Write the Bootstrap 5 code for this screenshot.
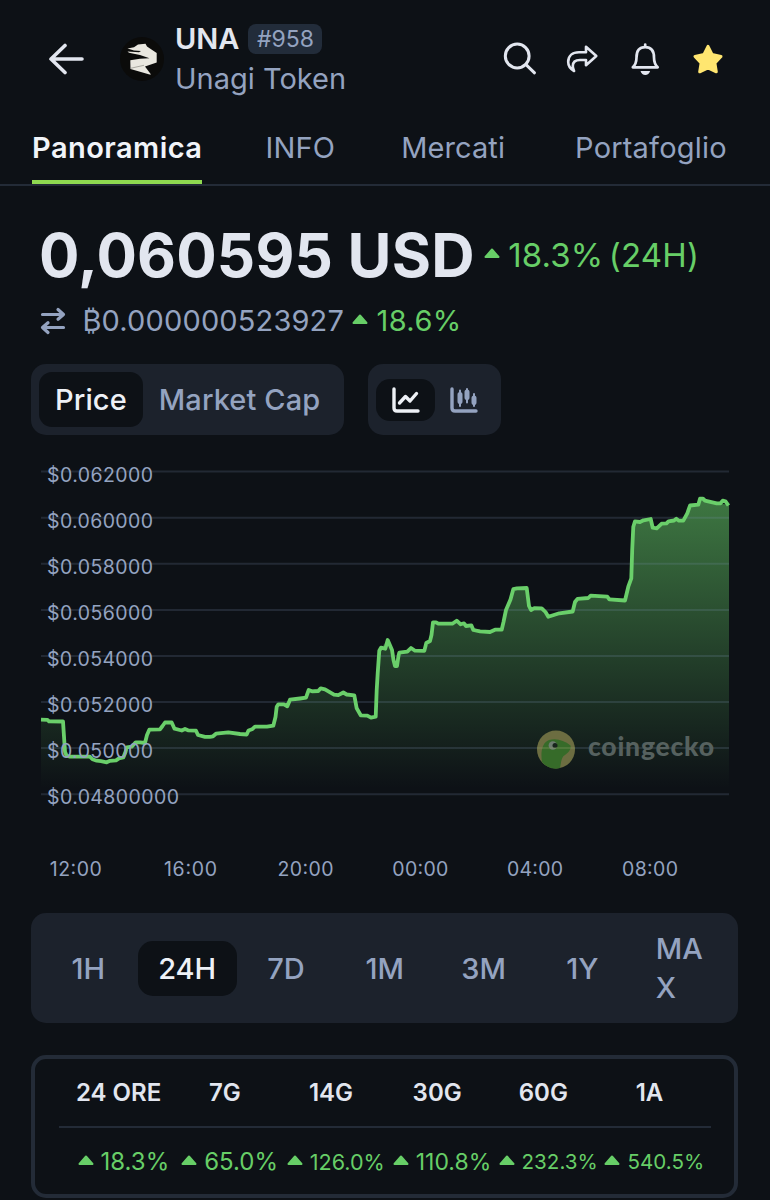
<!DOCTYPE html>
<html lang="it">
<head>
<meta charset="utf-8">
<meta name="viewport" content="width=device-width, initial-scale=1">
<title>UNA – Unagi Token</title>
<link href="https://cdn.jsdelivr.net/npm/bootstrap@5.3.0/dist/css/bootstrap.min.css" rel="stylesheet">
<style>
:root{--bg:#0d1116;--panel:#1c222c;--line:#232b37;--muted:#94a3c0;--fg:#e2e6ef;--up:#67ce67}
body{background:var(--bg);color:var(--fg);font-family:Inter,"Liberation Sans",sans-serif;font-size:29px;line-height:40px;width:770px;height:1200px;overflow:hidden}
svg{display:block;flex:none}
.muted{color:var(--muted)}
.up{color:var(--up)}
.topbar{height:118px;padding:0 44px 0 48px}
.avatar{margin-left:36px;margin-right:11px}
.rank{background:#222c3a;border-radius:8px;font-size:23px;line-height:31px;height:30px;width:74px;text-align:center;margin-left:9px}
.actions{gap:26.8px}
.tabs{height:68px;border-bottom:2px solid var(--line);padding-left:32px}
.tabs a{color:var(--muted);text-decoration:none;height:66px;padding-top:10px;border-bottom:4px solid transparent}
.tabs a.active{color:#f1f4f9;font-weight:600;border-color:#8fd950;letter-spacing:.45px}
.tabs .t-info{margin-left:63px;letter-spacing:.2px}
.tabs .t-mkt{margin-left:66px;letter-spacing:.1px}
.tabs .t-port{margin-left:70px;letter-spacing:.2px}
.price-row{height:70px;margin-top:34px;padding-left:39px}
.price{font-size:60px;font-weight:700;line-height:70px;letter-spacing:.2px}
.change{font-size:33px;letter-spacing:.15px;word-spacing:-4px}
.btc-row{height:40px;margin-top:11px;padding-left:40px}
.btc{letter-spacing:.15px}
.btcp{letter-spacing:.4px}
.switches{margin:23px 0 0 31px;gap:24px}
.seg{background:var(--panel);border-radius:15px;height:71px;padding:0 8px}
.seg-btn{border-radius:13px;height:55px;font-weight:500;padding:0 16px;line-height:56px;letter-spacing:.1px}
.on{background:var(--bg);color:#eef1f6}
.seg-icon{height:42px;width:58.5px;border-radius:14px}
.chart{margin-top:15px}
.ranges{margin:23px 32px 0 31px;height:110px;border-radius:15px;background:var(--panel);padding:0 8px;font-weight:500}
.ranges .cell{flex:0 0 98.8px;text-align:center;height:55px;line-height:55px;border-radius:15px}
.ranges .wrap{height:auto;line-height:39px;text-align:left;padding:0 22px 0 24px;word-break:break-all}
.perf{margin:32px 32px 0 31px;height:143px;border:4px solid var(--line);border-radius:15px;padding:0 23px 0 24px}
.perf-head,.perf-vals{display:grid;grid-template-columns:repeat(6,106.2px);text-align:center;margin-left:6.5px}
.perf-head{height:67px;padding-top:14px;font-size:24px;font-weight:600}
.perf hr{margin:0;border:0;height:2px;background:var(--line);opacity:1}
.perf-vals{padding-top:14px;font-size:24px;margin-left:11.3px}
.perf-vals>div{gap:7px}
.perf-vals svg{margin-bottom:4px}
.perf-vals .s23{font-size:23px}
.perf-vals .s22{font-size:21.6px}
.perf-vals .s21{font-size:20.6px}
</style>
</head>
<body>
<svg width="0" height="0" class="position-absolute"><defs>
<symbol id="tri" viewBox="0 0 16 11"><path d="M8 1.500 14.500 9H1.500Z" fill="#67ce67" stroke="#67ce67" stroke-width="2" stroke-linejoin="round"/></symbol>
</defs></svg>

<header class="topbar d-flex align-items-center">
  <svg width="36" height="32" viewBox="0 0 36 32" fill="none" stroke="#e2e6ef" stroke-width="3.600" stroke-linecap="round" stroke-linejoin="round"><path d="M34 16H3M17 2.500 3 16 17 29.500"/></svg>
  <svg class="avatar" width="44" height="44" viewBox="0 0 44 44"><circle cx="22" cy="22" r="22" fill="#0b0b0a"/><path d="M7.500 11.500 14 10.200 18 7.500 25.500 6.700 27 9.500 36.700 16V25.500L25 29.500 31 37.500 29.500 37.600 10.500 32 10.300 23.200 20 21.800 29.500 21.300 20 18 9 15.800 7.500 14.500 19 15.300 21 14 14 13.500Z" fill="#e9e7df"/><path d="M11 31.200 24 28.300" stroke="#8d8b84" stroke-width=".7"/></svg>
  <div>
    <div class="d-flex align-items-center"><span class="fw-semibold">UNA</span><span class="rank muted">#958</span></div>
    <div class="muted">Unagi Token</div>
  </div>
  <div class="actions d-flex ms-auto">
    <svg width="36" height="36" viewBox="0 0 36 36" fill="none" stroke="#e2e6ef" stroke-width="3" stroke-linecap="round"><circle cx="15.200" cy="15" r="11.900"/><path d="M24 23.600 32.500 31.800"/></svg>
    <svg width="36" height="36" viewBox="0 0 36 36" fill="none" stroke="#e2e6ef" stroke-width="2.600" stroke-linejoin="round"><path d="M22 5.800 32.300 15 22 24.200V19H16C11 19 8.800 21.500 8.800 25c0 2.300.7 3.500 1.300 5C6.500 28 4.200 25 4.200 21c0-6.500 4.500-9.700 10.800-9.700h7Z"/></svg>
    <svg width="36" height="36" viewBox="0 0 36 36" fill="none" stroke="#e2e6ef" stroke-width="2.700" stroke-linejoin="round" stroke-linecap="round"><path d="M18.200 3.500V6M5.800 26.300C8.200 24 9.500 21.500 9.500 16.500 9.500 9.500 12.500 6.200 18.200 6.200S27 9.500 27 16.500C27 21.500 28.300 24 30.700 26.300Z"/><path d="M13.500 30h9.600c-.8 2.500-2.500 3.900-4.800 3.900s-4-1.400-4.800-3.900Z" fill="#e2e6ef" stroke="none"/></svg>
    <svg width="36" height="36" viewBox="0 0 36 36" fill="#ffe670" stroke="#ffe670" stroke-width="3" stroke-linejoin="round"><path d="M18 5.300 22 13.500 31 15.400 24.900 21.900 26.300 30.800 18 26.800 9.700 30.800 11.100 21.900 5 15.400 14 13.500Z"/></svg>
  </div>
</header>

<nav class="tabs d-flex">
  <a href="#" class="active">Panoramica</a><a href="#" class="t-info">INFO</a><a href="#" class="t-mkt">Mercati</a><a href="#" class="t-port">Portafoglio</a>
</nav>

<main>
  <div class="price-row d-flex align-items-center">
    <span class="price">0,060595 USD</span>
    <svg width="16" height="11" style="margin:0 8px 3px 9.5px"><use href="#tri"/></svg>
    <span class="up change">18.3% (24H)</span>
  </div>
  <div class="btc-row d-flex align-items-center">
    <svg width="26" height="28" viewBox="0 0 26 28" fill="none" stroke="#94a3c0" stroke-width="3.200" stroke-linecap="round" stroke-linejoin="round"><path d="M2.500 7.500H23M18 2.500 23.500 7.500 18 12.300M23.500 20.500H3M8 15.700 2.500 20.500 8 25.500"/></svg>
    <span class="muted btc" style="margin-left:16.5px">₿0.000000523927</span>
    <svg width="16" height="11" style="margin:0 8px 3px 8.5px"><use href="#tri"/></svg>
    <span class="up btcp">18.6%</span>
  </div>

  <div class="switches d-flex">
    <div class="seg d-flex align-items-center"><span class="seg-btn on">Price</span><span class="seg-btn muted">Market Cap</span></div>
    <div class="seg d-flex align-items-center">
      <span class="seg-icon on d-flex align-items-center justify-content-center"><svg width="28" height="26" viewBox="0 0 28 26" fill="none" stroke="#eef1f6" stroke-width="3.400" stroke-linecap="round" stroke-linejoin="round"><path d="M2 2v19q0 3 3 3h21M7.500 16 13.500 9.500 18 14 24.500 6.500"/></svg></span>
      <span class="seg-icon d-flex align-items-center justify-content-center"><svg width="28" height="26" viewBox="0 0 28 26" fill="none" stroke="#94a3c0" stroke-linecap="round"><path stroke-width="3.400" d="M2 2v19q0 3 3 3h21"/><path stroke-width="2" d="M10 3.500v15.500M17 2v13.500M24 7v12"/><path stroke-width="5" d="M10 7.500v7M17 5v5.500M24 11v4.500"/></svg></span>
    </div>
  </div>

  <svg class="chart" width="770" height="440" viewBox="0 450 770 440">
    <defs><linearGradient id="fade" gradientUnits="userSpaceOnUse" x1="0" y1="498" x2="0" y2="788"><stop offset="0" stop-color="#67ce67" stop-opacity=".54"/><stop offset="1" stop-color="#67ce67" stop-opacity="0"/></linearGradient></defs>
    <path fill="url(#fade)" d="M41 720 62.700 721.500 65 751.700 70 756.700H90L96.700 761 106.700 762.300 118 759 123.300 757.300 126.700 747.300 135.700 742.300H145L149.300 729.300 160 729 165 722.300H171.700L175 729 196 730.700 200 736 210 736.700 216 733.300 246.700 734.700 255 726.300 273.300 726 276.700 706.700 284 704.300 290 699.300 306 697.700 308.700 690 320.700 688.300 334 694.700 354.300 695.300 356.700 708.300 360.700 715.300 375.700 716.700 377.700 673.300 381 647.700 387.700 640 395 666H397L399.300 652.700 411 648 424.300 650.700 430 641 433.300 622.300 452.300 623.700 456.700 620.700 471.300 625.700 480 631.300 490 632 501.700 629.700 506 610 513.300 589 526.700 588 531 610 541.700 608.300 548.300 616.700 572.700 611.300 576.700 599.300 590.700 595.700 607.300 596.700 625 600.300 631.300 578.300 633.300 526.700 635 521.300 650.700 519 652.700 527.700 656.700 528.300 668.300 521.300 683.300 520.700 690 505.300 698.300 504.700 700 498.700 716.700 503.300 729 504.700V790H41Z"/>
    <path stroke="#8297b8" stroke-opacity=".19" stroke-width="2" d="M41 471.500H729M41 517.700H729M41 563.800H729M41 610H729M41 656H729M41 702H729M41 748H729M41 794.300H729"/>
    <g transform="translate(537 730.500)"><circle cx="19" cy="19" r="19" fill="#6c6d41"/><path d="M5 31.500C3.500 22 5 12 12 9.500 20 7.500 27 10 33.500 15 34.500 20 30 23 26.500 25.500 24 28.500 24 33 23 37.500 16 39.500 9 36.500 5 31.500Z" fill="#366b29"/><circle cx="15.800" cy="15" r="4.200" fill="#6d7c70"/><circle cx="18" cy="15" r="2.500" fill="#17241c"/><path d="M0 17.500H38" stroke="#8a9a6a" stroke-opacity=".4" stroke-width="1.500"/></g>
    <text x="588" y="756" textLength="126" lengthAdjust="spacing" font-family="Lato,sans-serif" font-weight="900" font-size="26.500" fill="#56615f">coingecko</text>
    <path fill="none" stroke="#6acf6a" stroke-width="3.800" stroke-linejoin="round" stroke-linecap="butt" d="M41 719.700 47.500 719.900 49 721.300 63 721.500 65 751.700 66.500 755.500 70 756.700H90L92.500 759.300 96.700 760.700 101 761.200 106.700 762.300 110 760.800 116 760.300 119 758.300 123.300 757.500 125.500 752 126.700 747.300 131.700 746.700 135.700 742.300H140L145 743 147 735 149.300 729.700 160 729.300 162.500 726 165 722.500H171.700L174.500 728.700 181.700 730.500 185 729 188 730.300 196 730.700 198 735 205 736.800H210L213 736.300 216 733.700 228.300 732.300 240 734 246.700 734.500 248.500 730.500 252 729.300 255 726.600 267 726.700 273.300 725.700 275.500 717 276.700 706.700 278.300 704.300H284L287.300 706.300 290 699.700 300 698.500 306 697.700 308.700 690 312 691.300 318.300 691 320.700 688.300 325 689.300 334 694.700 338.300 695.200 343.300 692.500 346.700 694.500 354.300 695.300 356.700 708.300 360.700 715.300 367.300 715.700 371 717.700 375.700 716.700 376.700 690 377.700 673.300 379.300 650.700 381 647.700 385.300 648.700 387.700 640 392 650 393.500 660 395 666H397L398.500 656 399.300 652.700 407.300 651.700 411 648 415 650.700 424.300 650.900 426.300 643 430 641 431.500 635 433 622.300 436 622.300 438.300 623.700H452.300L456.700 620.700 460.700 624.300 464 623.300 466 626 471.300 625.300 473.300 630 480 631.300 490 632 495 629.700 501.700 629.700 503.500 622 506 610 510.500 599.500 513.300 589.200 517 588.300 526.700 588 529 606 531 610 534.300 608.200 541.700 608.300 545.500 612 548.300 616.700 559.300 613.300 572.700 611.500 575 602 577.500 598.800 588.300 598 590.700 595.700 607.300 596.700 609.300 599.300 625 600.500 628.300 586.700 631.300 578.300 632.200 550 633.300 526.700 635 521.300 640 522 643.500 520.300 650.700 519 652.700 527.700 656.700 528.300 661.700 523.700 666.500 523.300 668.500 521.300 674 520.500 676.300 518.700 679 520.700 683.300 520.700 687.300 513.300 690 505.500 698.300 504.700 700 498.700H703L705 500.700 716.700 503.300 720.500 503.300 722.700 500.700 725.500 501.300 728.500 505.500"/>
    <g fill="#94a3c0" font-family="Inter,sans-serif" font-size="19.500">
      <text x="47" y="481.500" textLength="106">$0.062000</text><text x="47" y="527.600" textLength="106">$0.060000</text><text x="47" y="573.700" textLength="106">$0.058000</text><text x="47" y="619.800" textLength="106">$0.056000</text><text x="47" y="665.900" textLength="106">$0.054000</text><text x="47" y="712" textLength="106">$0.052000</text><text x="47" y="758" textLength="106">$0.050000</text><text x="47" y="804" textLength="132">$0.04800000</text>
      <g text-anchor="middle"><text x="75.800" y="875.500" textLength="52">12:00</text><text x="190.500" y="875.500" textLength="53">16:00</text><text x="305.500" y="875.500" textLength="56">20:00</text><text x="420.300" y="875.500" textLength="56">00:00</text><text x="535" y="875.500" textLength="56">04:00</text><text x="650" y="875.500" textLength="56">08:00</text></g>
    </g>
  </svg>

  <div class="ranges d-flex align-items-center muted">
    <span class="cell">1H</span><span class="cell on">24H</span><span class="cell">7D</span><span class="cell">1M</span><span class="cell">3M</span><span class="cell">1Y</span><span class="cell wrap">MAX</span>
  </div>

  <section class="perf">
    <div class="perf-head"><div>24 ORE</div><div>7G</div><div>14G</div><div>30G</div><div>60G</div><div>1A</div></div>
    <hr>
    <div class="perf-vals up">
      <div class="d-flex align-items-center justify-content-center"><svg width="16" height="11"><use href="#tri"/></svg>18.3%</div>
      <div class="d-flex align-items-center justify-content-center"><svg width="16" height="11"><use href="#tri"/></svg>65.0%</div>
      <div class="d-flex align-items-center justify-content-center s22"><svg width="16" height="11"><use href="#tri"/></svg>126.0%</div>
      <div class="d-flex align-items-center justify-content-center s23"><svg width="16" height="11"><use href="#tri"/></svg>110.8%</div>
      <div class="d-flex align-items-center justify-content-center s21"><svg width="16" height="11"><use href="#tri"/></svg>232.3%</div>
      <div class="d-flex align-items-center justify-content-center s21"><svg width="16" height="11"><use href="#tri"/></svg>540.5%</div>
    </div>
  </section>
</main>
<script src="https://cdn.jsdelivr.net/npm/bootstrap@5.3.0/dist/js/bootstrap.bundle.min.js"></script>
</body>
</html>
